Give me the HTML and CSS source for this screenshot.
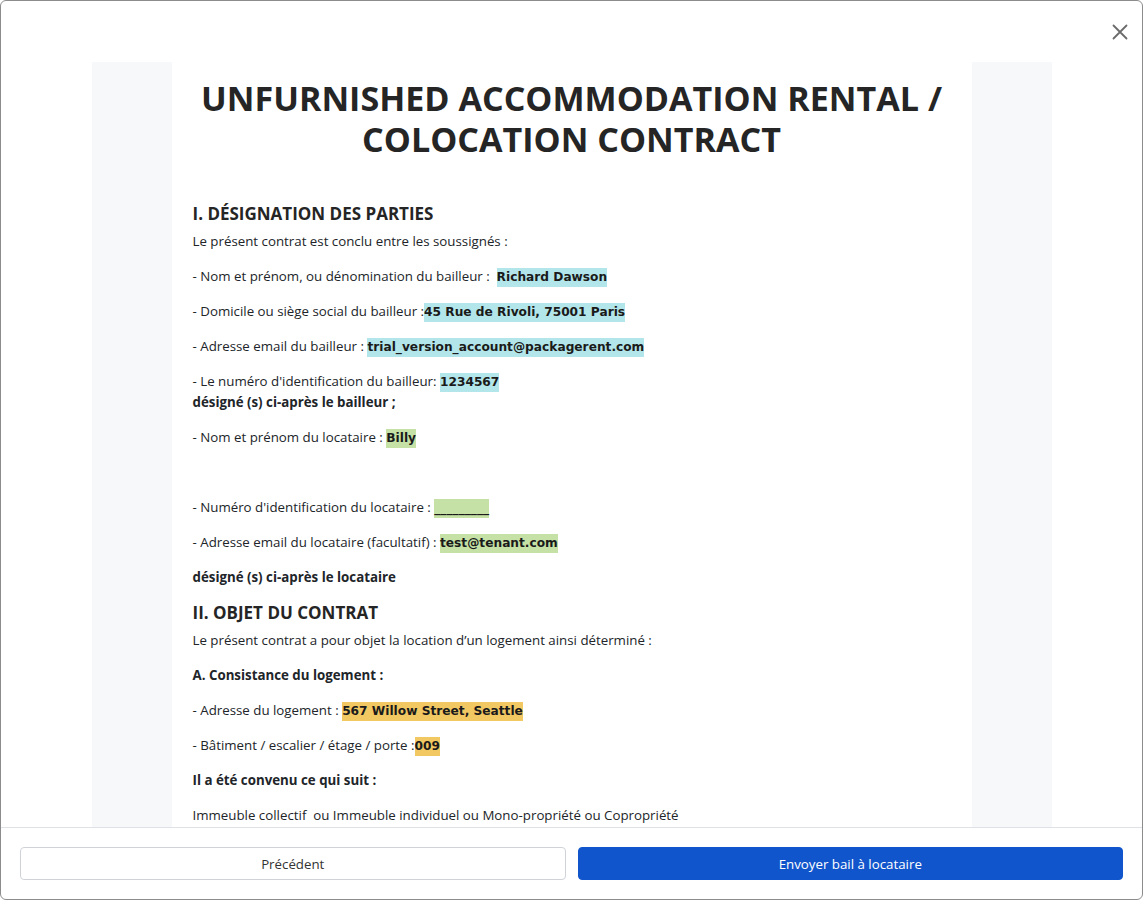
FILE: index.html
```html
<!DOCTYPE html>
<html lang="fr">
<head>
<meta charset="utf-8">
<title>Contrat</title>
<link rel="stylesheet" href="styles.css">
</head>
<body>
<div class="modal">
  <div class="modal-header">
    <button class="close" aria-label="Fermer">
      <svg width="16" height="16" viewBox="0 0 16 16"><path d="M1.5 1.5 L14.5 14.5 M14.5 1.5 L1.5 14.5" stroke="#6b6b6b" stroke-width="1.8" fill="none" stroke-linecap="round"/></svg>
    </button>
  </div>
  <div class="modal-body">
    <div class="doc-wrap">
      <div class="doc">
        <h1 class="title">UNFURNISHED ACCOMMODATION RENTAL / COLOCATION CONTRACT</h1>
        <h2 class="section">I. DÉSIGNATION DES PARTIES</h2>
        <p>Le présent contrat est conclu entre les soussignés :</p>
        <p>- Nom et prénom, ou dénomination du bailleur : &nbsp;<span class="val cyan">Richard Dawson</span></p>
        <p>- Domicile ou siège social du bailleur :<span class="val cyan">45 Rue de Rivoli, 75001 Paris</span></p>
        <p>- Adresse email du bailleur : <span class="val cyan">trial_version_account@packagerent.com</span></p>
        <p>- Le numéro d'identification du bailleur: <span class="val cyan">1234567</span><br><b>désigné (s) ci-après le bailleur ;</b></p>
        <p>- Nom et prénom du locataire : <span class="val green">Billy</span></p>
        <p>&nbsp;</p>
        <p>- Numéro d'identification du locataire : <span class="val green">_________</span></p>
        <p>- Adresse email du locataire (facultatif) : <span class="val green">test@tenant.com</span></p>
        <p><b>désigné (s) ci-après le locataire</b></p>
        <h2 class="section">II. OBJET DU CONTRAT</h2>
        <p>Le présent contrat a pour objet la location d’un logement ainsi déterminé :</p>
        <p><b>A. Consistance du logement :</b></p>
        <p>- Adresse du logement : <span class="val orange">567 Willow Street, Seattle</span></p>
        <p>- Bâtiment / escalier / étage / porte :<span class="val orange">009</span></p>
        <p><b>Il a été convenu ce qui suit :</b></p>
        <p>Immeuble collectif &nbsp;ou Immeuble individuel ou Mono-propriété ou Copropriété</p>
        <p>&nbsp;</p>
      </div>
    </div>
  </div>
  <div class="modal-footer">
    <button class="btn btn-secondary">Précédent</button>
    <button class="btn btn-primary">Envoyer bail à locataire</button>
  </div>
</div>
</body>
</html>
```

FILE: styles.css
```css
* { box-sizing: border-box; }
html, body { margin: 0; padding: 0; height: 100%; }
body {
  font-family: "Open Sans", "Noto Sans", "Liberation Sans", sans-serif;
  color: #212529;
  background: #ffffff;
}
.modal {
  height: 900px;
  border: 1px solid #8c8c8c;
  border-radius: 6px;
  display: flex;
  flex-direction: column;
  overflow: hidden;
  background: #fff;
}
.modal-header {
  height: 61px;
  flex: 0 0 auto;
  display: flex;
  justify-content: flex-end;
  align-items: flex-start;
  padding: 23px 14px 0 0;
}
.close {
  border: 0;
  background: transparent;
  padding: 0;
  width: 16px;
  height: 16px;
  cursor: pointer;
  display: flex;
}
.modal-body {
  flex: 1 1 auto;
  overflow: hidden;
}
.doc-wrap {
  width: 960px;
  margin: 0 auto;
  padding: 0 80px;
  background: #f7f8fa;
  height: 100%;
}
.doc {
  background: #fff;
  padding: 16px 21px 0;
  height: 100%;
  overflow: hidden;
  font-size: 13.3px;
  line-height: 21px;
}
.title {
  font-size: 34.1px;
  line-height: 41px;
  font-weight: 700;
  text-align: center;
  margin: 0 0 43px;
  color: #252525;
}
.section {
  font-size: 17px;
  line-height: 22px;
  font-weight: 700;
  margin: 0 0 6px;
  color: #252525;
}
.doc p { margin: 0 0 14px; }
.doc b { font-weight: 700; }
.val {
  font-family: "DejaVu Sans", Verdana, sans-serif;
  font-weight: 700;
  font-size: 12.2px;
  line-height: 14px;
  color: #1a1a1a;
  padding: 2px 0 3px;
}
.cyan { background: #b3e6ea; }
.green { background: #c5e1a5; }
.orange { background: #f2c862; }
.modal-footer {
  flex: 0 0 auto;
  border-top: 1px solid #dee2e6;
  padding: 19px;
  display: flex;
  gap: 12px;
}
.btn {
  flex: 1 1 0;
  height: 33px;
  border-radius: 4px;
  font-family: "Open Sans", "Noto Sans", sans-serif;
  font-size: 13.3px;
  cursor: pointer;
}
.btn-secondary {
  background: #fff;
  border: 1px solid #cfd3d8;
  color: #333;
}
.btn-primary {
  background: #1155cc;
  border: 1px solid #1155cc;
  color: #fff;
}
```
